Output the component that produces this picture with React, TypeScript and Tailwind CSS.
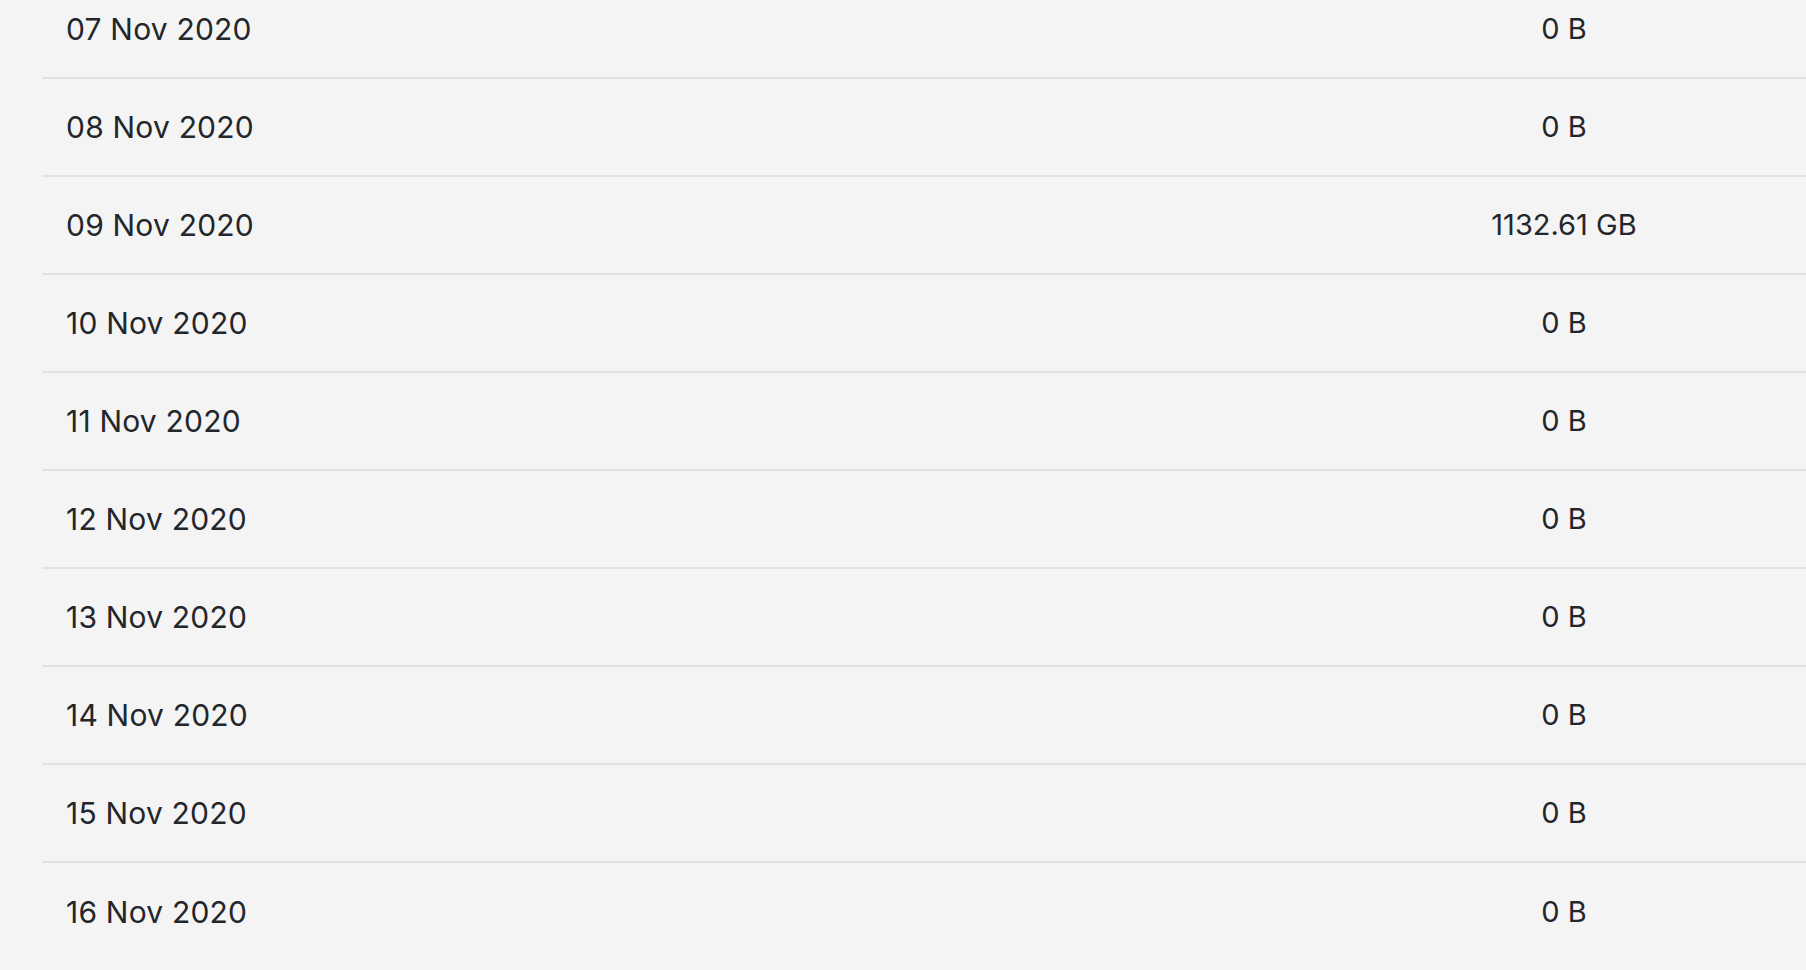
const rows = [
    { date: "07 Nov 2020", size: "0 B" },
    { date: "08 Nov 2020", size: "0 B" },
    { date: "09 Nov 2020", size: "1132.61 GB" },
    { date: "10 Nov 2020", size: "0 B" },
    { date: "11 Nov 2020", size: "0 B" },
    { date: "12 Nov 2020", size: "0 B" },
    { date: "13 Nov 2020", size: "0 B" },
    { date: "14 Nov 2020", size: "0 B" },
    { date: "15 Nov 2020", size: "0 B" },
    { date: "16 Nov 2020", size: "0 B" },
];

const App = () => {
    return (
        <div className="h-[970px] w-full overflow-hidden bg-[#f4f4f4] font-['Inter',sans-serif] text-[#23262b]">
            <div className="-mt-[19px] pl-[42px]">
                {rows.map((row) => (
                    <div
                        key={row.date}
                        className="grid h-[98px] grid-cols-[1fr_484px] items-center border-b-2 border-[#dfe2e6] last:border-0"
                    >
                        <p className="pl-[24px] text-[30px] tracking-[0.2px]">{row.date}</p>
                        <p className="text-center text-[29px]">{row.size}</p>
                    </div>
                ))}
            </div>
        </div>
    );
};

export default App;
